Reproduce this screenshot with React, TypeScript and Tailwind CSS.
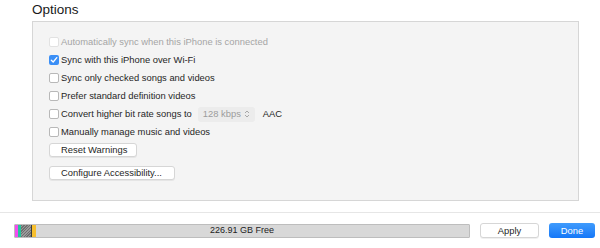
import React from 'react';

const font = { fontFamily: '"Liberation Sans", Arial, sans-serif' };

function Checkbox({ checked = false, disabled = false }: { checked?: boolean; disabled?: boolean }) {
  if (checked) {
    return (
      <span className="flex h-[10px] w-[10px] shrink-0 items-center justify-center rounded-[2px] bg-[#3b8ff6]">
        <svg width="8" height="8" viewBox="0 0 8 8">
          <path d="M1.3 4.2 L3.2 6 L6.8 1.6" fill="none" stroke="#fff" strokeWidth="1.3" strokeLinecap="round" strokeLinejoin="round" />
        </svg>
      </span>
    );
  }
  return (
    <span
      className={`h-[10px] w-[10px] shrink-0 rounded-[2px] border bg-white ${
        disabled ? 'border-[#e2e2e2]' : 'border-[#b8b8b8]'
      }`}
    />
  );
}

function Row({ label, checked, disabled, children }: { label: string; checked?: boolean; disabled?: boolean; children?: React.ReactNode }) {
  return (
    <div className="flex h-[18px] items-center gap-[2px] whitespace-nowrap">
      <Checkbox checked={checked} disabled={disabled} />
      <span className={disabled ? 'text-[#a5a5a5]' : 'text-[#262626]'}>{label}</span>
      {children}
    </div>
  );
}

function MacButton({ children, className = '' }: { children: React.ReactNode; className?: string }) {
  return (
    <button
      className={`flex h-[14px] items-center whitespace-nowrap rounded-[3px] border border-[#d6d6d6] bg-white px-[11px] text-[#262626] shadow-[0_1px_0_rgba(0,0,0,0.06)] ${className}`}
    >
      {children}
    </button>
  );
}

export default function App() {
  return (
    <div className="relative h-[248px] w-[600px] overflow-hidden bg-white text-[9.4px] leading-none" style={font}>
      <div className="pl-[32px] pt-[2px] text-[13.5px] leading-[15px] text-[#1a1a1a]">Options</div>

      <div className="ml-[32px] mt-[4px] h-[180px] w-[547px] border border-[#d6d6d6] bg-[#f4f4f4] pl-[16px] pt-[11px]">
        <Row label="Automatically sync when this iPhone is connected" disabled />
        <Row label="Sync with this iPhone over Wi-Fi" checked />
        <Row label="Sync only checked songs and videos" />
        <Row label="Prefer standard definition videos" />
        <Row label="Convert higher bit rate songs to">
          <span className="ml-[4px] flex h-[15px] w-[57px] items-center justify-between rounded-[3px] bg-[#ececec] pl-[5px] pr-[5px] text-[#9c9c9c]">
            128 kbps
            <svg width="6" height="10" viewBox="0 0 6 10">
              <path d="M1 4 L3 2 L5 4 M1 6 L3 8 L5 6" fill="none" stroke="#a8a8a8" strokeWidth="1" />
            </svg>
          </span>
          <span className="ml-[6px] text-[#262626]">AAC</span>
        </Row>
        <Row label="Manually manage music and videos" />

        <div className="mt-[2px] flex flex-col items-start gap-[9px]">
          <MacButton className="w-[88px]">Reset Warnings</MacButton>
          <MacButton className="w-[126px]">Configure Accessibility...</MacButton>
        </div>
      </div>

      <div className="mt-[11px] h-px w-full bg-[#e6e6e6]" />

      <div className="mt-[10px] flex items-center pl-[14px]">
        <div className="relative flex h-[14px] w-[456px] overflow-hidden rounded-[1px] border border-[#bdbdbd] bg-[#d8d8d8]">
          <div className="h-full w-[3px] shrink-0 bg-[#f14cf0]" />
          <div className="h-full w-[3px] shrink-0 bg-[#25c49c]" />
          <div className="h-full w-[10px] shrink-0 bg-[repeating-linear-gradient(135deg,#6f6f6f_0px,#6f6f6f_1px,#9a9a9a_1px,#9a9a9a_2px)]" />
          <div className="h-full w-px shrink-0 bg-[#3a3a3a]" />
          <div className="h-full w-[4px] shrink-0 bg-[#f7bf2e]" />
          <span className="absolute inset-0 flex items-center justify-center text-[9px] text-[#222]">226.91 GB Free</span>
        </div>
        <MacButton className="ml-[10px] h-[15px] w-[59px] justify-center px-0">Apply</MacButton>
        <button className="ml-[10px] flex h-[15px] w-[46px] items-center justify-center rounded-[3px] bg-gradient-to-b from-[#3f9bfc] to-[#1377f8] text-white">
          Done
        </button>
      </div>
    </div>
  );
}
